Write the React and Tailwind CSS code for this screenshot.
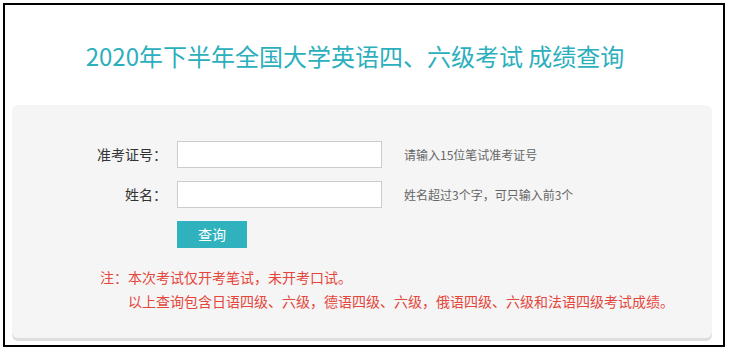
export default function App() {
  const font = { fontFamily: '"Noto Sans CJK SC", "Noto Sans", sans-serif' };
  return (
    <div className="w-[729px] h-[351px] bg-white pl-[3px] pt-[3px]" style={font}>
      <div className="w-[722px] h-[344px] border-2 border-black bg-white flex flex-col">
        <div className="h-[100px] flex items-center justify-center pr-[18px] pt-[2px]">
          <h1 className="text-[24px] leading-[30px] text-[#2cafbd]">
            2020年下半年全国大学英语四、六级考试 成绩查询
          </h1>
        </div>
        <div className="ml-[7px] w-[700px] h-[233px] bg-[#f5f5f5] rounded-[6px] shadow-[0_3px_0_#dedede] pt-[36px]">
          <div className="flex items-center h-[27px]">
            <div className="w-[155px] text-right text-[14px] text-[#333] leading-[27px]">准考证号：</div>
            <div className="ml-[10px] w-[205px] h-[27px] bg-white border border-[#cccccc]"></div>
            <div className="ml-[22px] text-[12px] text-[#666] leading-[27px]">请输入15位笔试准考证号</div>
          </div>
          <div className="flex items-center h-[27px] mt-[13px]">
            <div className="w-[155px] text-right text-[14px] text-[#333] leading-[27px]">姓名：</div>
            <div className="ml-[10px] w-[205px] h-[27px] bg-white border border-[#cccccc]"></div>
            <div className="ml-[22px] text-[12px] text-[#666] leading-[27px]">姓名超过3个字，可只输入前3个</div>
          </div>
          <div className="flex mt-[13px]">
            <div className="ml-[165px] w-[70px] h-[27px] bg-[#2fb2bd] text-white text-[14px] leading-[27px] text-center">查询</div>
          </div>
          <div className="mt-[17px] ml-[88px] text-[14px] leading-[24px] text-[#e4463c]">
            <div>注：本次考试仅开考笔试，未开考口试。</div>
            <div className="pl-[28px]">以上查询包含日语四级、六级，德语四级、六级，俄语四级、六级和法语四级考试成绩。</div>
          </div>
        </div>
      </div>
    </div>
  );
}
